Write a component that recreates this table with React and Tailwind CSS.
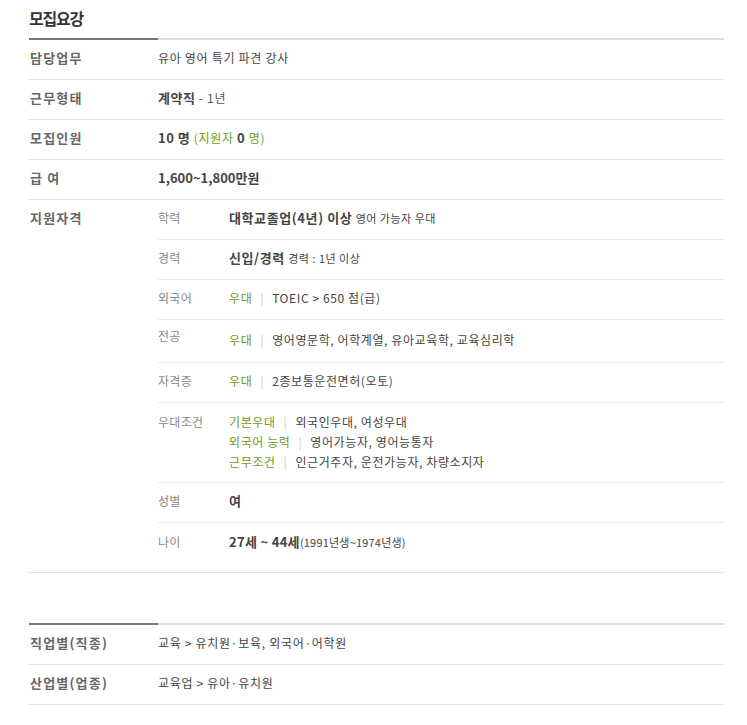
import React from 'react';

const FONT = { fontFamily: '"Noto Sans CJK KR", "Noto Sans", sans-serif' };

const Green = ({ children }) => <span className="text-[#6f9b24]">{children}</span>;
const Bar = () => <span className="mx-[8px] text-[#cccccc]">|</span>;

// top rule: dark stub under the label column, light for the rest
const TopRule = () => (
  <div className="flex h-[2px]">
    <div className="w-[129px] bg-[#777777]" />
    <div className="flex-1 bg-[#dddddd]" />
  </div>
);

const Row = ({ label, children }) => (
  <div className="flex h-[40px] items-center border-b border-[#e1e1e1] pb-[3px]">
    <div className="w-[129px] pl-px text-[13px] font-bold tracking-[1.2px] text-[#666666]">{label}</div>
    <div className="flex-1 text-[12px] tracking-[0.7px] text-[#444444]">{children}</div>
  </div>
);

const SubRow = ({ label, children, className = 'h-[40px] items-center pb-[3px]', labelClass = '', valueClass = '', last }) => (
  <div className={`flex ${last ? '' : 'border-b border-[#ececec]'} ${className}`}>
    <div className={`w-[71px] text-[12px] tracking-[0.3px] text-[#888888] ${labelClass}`}>{label}</div>
    <div className={`flex-1 text-[12px] tracking-[0.6px] text-[#444444] ${valueClass}`}>{children}</div>
  </div>
);

export default function App() {
  return (
    <div className="bg-white min-h-[725px]" style={FONT}>
      <div className="ml-[29px] w-[695px]">
        <div className="flex h-[38px] items-center pb-[2px]">
          <h2 className="text-[16px] font-bold tracking-[-1.2px] text-[#333333]">모집요강</h2>
        </div>
        <TopRule />

        <Row label="담당업무">유아 영어 특기 파견 강사</Row>
        <Row label="근무형태">
          <b className="text-[13px] tracking-[0.5px] text-[#444444]">계약직</b> <span className="text-[#555555]">- 1년</span>
        </Row>
        <Row label="모집인원">
          <b className="text-[13px] tracking-[0.5px]">10 명</b>{' '}
          <Green>
            (지원자 <b className="text-[13px] text-[#444444]">0</b> 명)
          </Green>
        </Row>
        <Row label="급 여">
          <b className="text-[13px] tracking-normal">1,600~1,800만원</b>
        </Row>

        {/* 지원자격 */}
        <div className="flex border-b border-[#e1e1e1] pb-[9px]">
          <div className="w-[129px] pl-px text-[13px] font-bold tracking-[1.2px] text-[#666666] leading-[35px]">지원자격</div>
          <div className="flex-1">
            <SubRow label="학력">
              <b className="text-[13px] tracking-[0.6px]">대학교졸업(4년) 이상</b>{' '}
              <span className="text-[11px] tracking-[0.5px]">영어 가능자 우대</span>
            </SubRow>
            <SubRow label="경력">
              <b className="text-[13px] tracking-[0.6px]">신입/경력</b>{' '}
              <span className="text-[11px] tracking-[0.5px]">경력 : 1년 이상</span>
            </SubRow>
            <SubRow label="외국어">
              <Green>우대</Green>
              <Bar />
              TOEIC &gt; 650 점(급)
            </SubRow>
            <SubRow
              label="전공"
              className="h-[43px] items-start"
              labelClass="pt-[6px] leading-[20px]"
              valueClass="pt-[10px] leading-[20px]"
            >
              <Green>우대</Green>
              <Bar />
              영어영문학, 어학계열, 유아교육학, 교육심리학
            </SubRow>
            <SubRow label="자격증">
              <Green>우대</Green>
              <Bar />
              2종보통운전면허(오토)
            </SubRow>
            <SubRow
              label="우대조건"
              className="items-start pt-[9px] pb-[10px] leading-[20px]"
            >
              <div>
                <Green>기본우대</Green>
                <Bar />
                외국인우대, 여성우대
              </div>
              <div>
                <Green>외국어 능력</Green>
                <Bar />
                영어가능자, 영어능통자
              </div>
              <div>
                <Green>근무조건</Green>
                <Bar />
                인근거주자, 운전가능자, 차량소지자
              </div>
            </SubRow>
            <SubRow label="성별">
              <b className="text-[13px]">여</b>
            </SubRow>
            <SubRow label="나이" last>
              <b className="text-[13px] tracking-[0.3px]">27세 ~ 44세</b>
              <span className="text-[11px] tracking-[0.2px]">(1991년생~1974년생)</span>
            </SubRow>
          </div>
        </div>

        <div className="mt-[50px]">
          <TopRule />
          <Row label="직업별(직종)">교육 &gt; 유치원·보육, 외국어·어학원</Row>
          <Row label="산업별(업종)">교육업 &gt; 유아·유치원</Row>
        </div>
      </div>
    </div>
  );
}
